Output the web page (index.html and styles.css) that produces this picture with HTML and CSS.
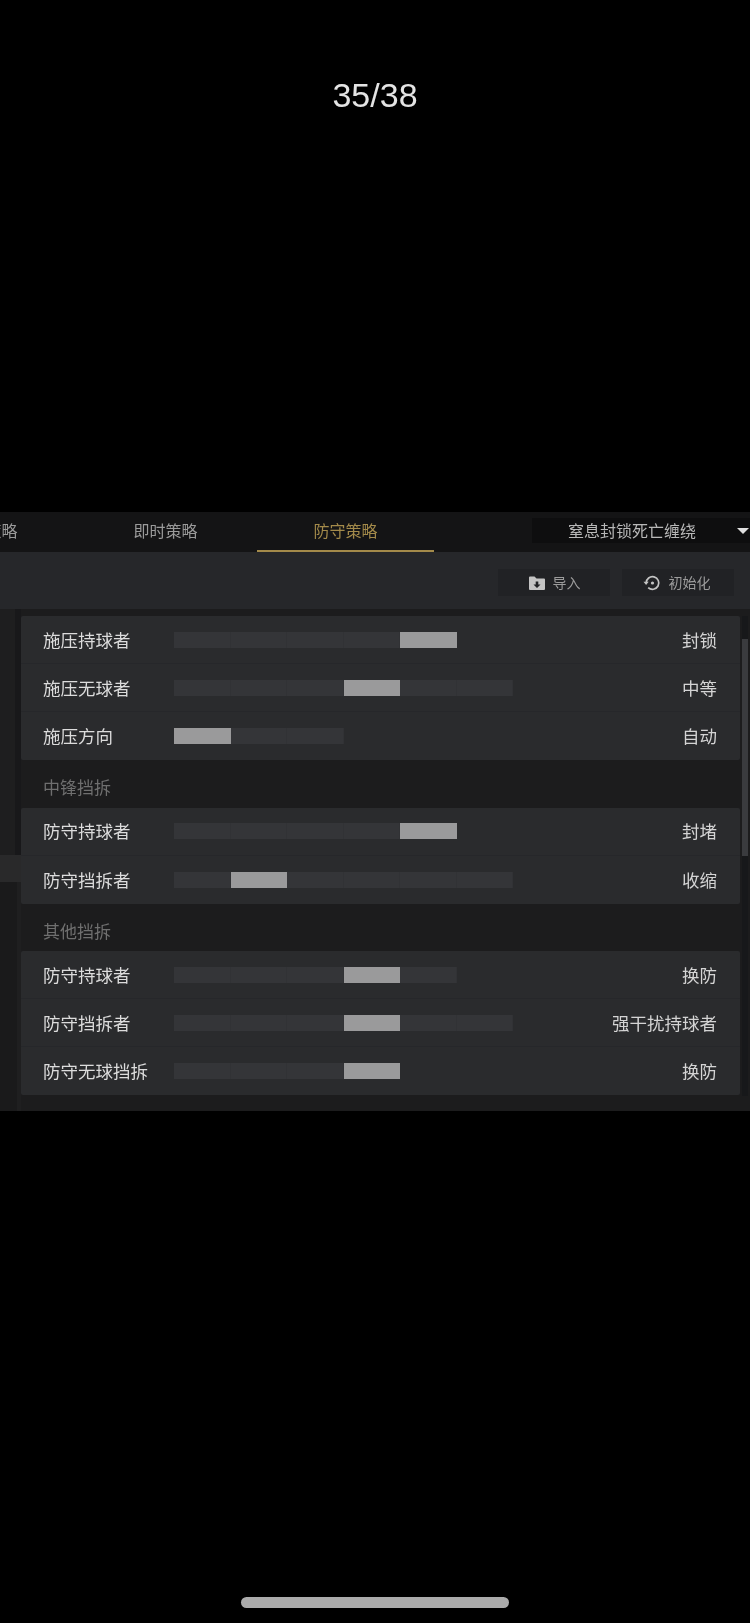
FILE: index.html
```html
<!DOCTYPE html>
<html lang="zh-CN">
<head>
<meta charset="utf-8">
<title>防守策略</title>
<link rel="stylesheet" href="styles.css">
</head>
<body>
<div class="page">
  <div class="counter">35/38</div>
  <section class="panel">
    <header class="tabs">
      <div class="tab tab-edge">进攻策略</div>
      <div class="tab">即时策略</div>
      <div class="tab tab-active">防守策略</div>
      <div class="select"><span class="select-text">窒息封锁死亡缠绕</span><span class="caret"></span></div>
    </header>
    <div class="toolbar">
      <button class="tool tool-import">
        <svg class="ico" viewBox="0 0 18 16"><path fill="#c4c4c4" fill-rule="evenodd" d="M1 2.500A1 1 0 0 1 2 1.500h4.500L8.500 3.500H16a1 1 0 0 1 1 1V14a1 1 0 0 1-1 1H2a1 1 0 0 1-1-1ZM7.700 6.500v3H5.500L9 13l3.500-3.500h-2.200v-3Z"/></svg>
        <span>导入</span>
      </button>
      <button class="tool tool-reset">
        <svg class="ico" viewBox="0 0 18 18"><path fill="none" stroke="#c4c4c4" stroke-width="1.700" d="M3.200 9a6.300 6.300 0 1 1 2 4.600"/><path fill="#c4c4c4" d="M0.500 7.800h5.200L3.100 11Z"/><circle cx="9.500" cy="9" r="1.600" fill="#c4c4c4"/></svg>
        <span>初始化</span>
      </button>
    </div>
    <div class="content">
      <aside class="rail"><div class="rail-top"></div><div class="rail-item"></div><div class="rail-rest"></div></aside>
      <div class="list">
        <div class="group">
          <div class="row"><span class="label">施压持球者</span><div class="bar"><i></i><i></i><i></i><i></i><i class="on"></i></div><span class="value">封锁</span></div>
          <div class="row"><span class="label">施压无球者</span><div class="bar"><i></i><i></i><i></i><i class="on"></i><i></i><i></i></div><span class="value">中等</span></div>
          <div class="row"><span class="label">施压方向</span><div class="bar"><i class="on"></i><i></i><i></i></div><span class="value">自动</span></div>
        </div>
        <div class="section">中锋挡拆</div>
        <div class="group">
          <div class="row"><span class="label">防守持球者</span><div class="bar"><i></i><i></i><i></i><i></i><i class="on"></i></div><span class="value">封堵</span></div>
          <div class="row"><span class="label">防守挡拆者</span><div class="bar"><i></i><i class="on"></i><i></i><i></i><i></i><i></i></div><span class="value">收缩</span></div>
        </div>
        <div class="section">其他挡拆</div>
        <div class="group">
          <div class="row"><span class="label">防守持球者</span><div class="bar"><i></i><i></i><i></i><i class="on"></i><i></i></div><span class="value">换防</span></div>
          <div class="row"><span class="label">防守挡拆者</span><div class="bar"><i></i><i></i><i></i><i class="on"></i><i></i><i></i></div><span class="value">强干扰持球者</span></div>
          <div class="row"><span class="label">防守无球挡拆</span><div class="bar"><i></i><i></i><i></i><i class="on"></i></div><span class="value">换防</span></div>
        </div>
      </div>
      <div class="scroll"><div class="thumb"></div></div>
    </div>
  </section>
  <div class="home"></div>
</div>
</body>
</html>
```
FILE: styles.css
```css
* { box-sizing: border-box; }
html, body { margin: 0; padding: 0; background: #000; }
body { font-family: "Noto Sans CJK SC", "Liberation Sans", sans-serif; }
.page { width: 750px; height: 1623px; display: flex; flex-direction: column; align-items: stretch; overflow: hidden; }
.counter { height: 512px; padding-top: 73px; text-align: center; color: #e4e4e4; font: 34px/44px "Liberation Sans", sans-serif; filter: blur(0.4px); }
.panel { height: 599px; display: flex; flex-direction: column; background: #1c1c1d; overflow: hidden; filter: blur(0.6px); }
.tabs { height: 40px; flex: none; display: flex; align-items: center; background: #141415; }
.tab { width: 177px; flex: none; height: 40px; line-height: 36px; text-align: center; color: #9a9a9a; font-size: 16px; border-bottom: 2px solid transparent; }
.tab-edge { margin-left: -103px; margin-right: 3px; }
.tab-active { margin-left: 3px; color: #a38a4a; border-bottom-color: #a38a4a; }
.select { margin: 0 0 4px auto; width: 218px; height: 25px; display: flex; align-items: center; background: #0e0e0f; padding-left: 36px; position: relative; color: #b8b8b8; font-size: 16px; }
.select-text { line-height: 25px; }
.caret { position: absolute; right: 1px; top: 10px; width: 0; height: 0; border-left: 6px solid transparent; border-right: 6px solid transparent; border-top: 6px solid #e0e0e0; }
.toolbar { height: 57px; flex: none; display: flex; justify-content: flex-end; align-items: center; gap: 12px; padding: 4px 16px 0 0; background: #26272a; }
.tool { width: 112px; height: 27px; display: flex; align-items: center; justify-content: center; gap: 7px; background: #212225; border: 0; padding: 0; color: #9c9c9c; font: 14px/27px "Noto Sans CJK SC", sans-serif; }
.tool-reset { padding-right: 3px; gap: 8px; }
.ico { width: 18px; height: 18px; flex: none; }
.content { flex: 1; display: flex; padding-top: 7px; }
.rail { width: 21px; flex: none; margin-top: -7px; display: flex; flex-direction: column; }
.rail-top { height: 246px; background: linear-gradient(90deg, #1e1e1f 0 15px, #18181a 15px 21px); }
.rail-item { height: 27px; background: #29292a; }
.rail-rest { flex: 1; background: linear-gradient(90deg, #1a1a1b 0 17px, #1f1f20 17px 21px); }
.list { width: 719px; flex: none; }
.group { background: #2a2b2d; border-radius: 2px; }
.row { height: 48px; display: flex; align-items: center; padding: 0 23px 0 22px; border-bottom: 1px solid #26272a; }
.group .row:last-child { border-bottom: 0; }
.label { width: 131px; flex: none; color: #dcdcdc; font-size: 17.500px; line-height: 24px; }
.value { margin-left: auto; color: #d4d4d4; font-size: 17.500px; line-height: 24px; }
.bar { display: flex; height: 16px; }
.bar i { display: block; width: 56.500px; background: #343538; border-right: 1px solid #313235; }
.bar i.on { background: #9a9a9b; border-right: 0; }
.section { height: 47.500px; padding: 4px 0 0 22px; color: #6f6f6f; font-size: 17px; line-height: 45px; background: #1c1c1d; }
.scroll { width: 6px; margin: 0 2px 15px 2px; background: #17181a; position: relative; }
.thumb { position: absolute; left: 0; right: 0; top: 23px; height: 217px; background: #3a3b3e; }
.home { width: 268px; height: 11px; margin: 486px 0 0 241px; background: #ababab; border-radius: 6px; }
```
